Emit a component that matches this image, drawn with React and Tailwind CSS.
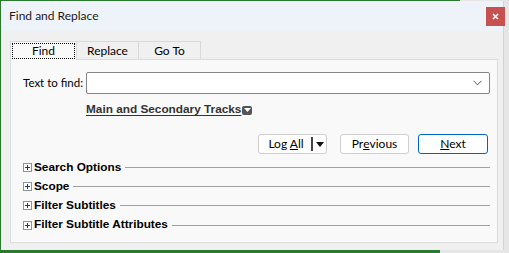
import React from "react";

const ui = { fontFamily: 'Lato, "Noto Sans", sans-serif' };
const bold = { fontFamily: '"Liberation Sans", Arial, sans-serif' };

function PlusBox() {
  return (
    <span className="w-[9px] h-[9px] border border-[#8a94a3] bg-white flex items-center justify-center shrink-0">
      <svg width="7" height="7" viewBox="0 0 7 7">
        <path d="M1 3.5h5M3.5 1v5" stroke="#1f3a68" strokeWidth="1" />
      </svg>
    </span>
  );
}

function Section({ label, tall }) {
  return (
    <div className={tall ? "flex items-center h-[20px]" : "flex items-center h-[19px]"}>
      <PlusBox />
      <span className="ml-[2px] text-[11.8px] font-bold text-black leading-none whitespace-nowrap" style={bold}>
        {label}
      </span>
      <div className="flex-1 h-px bg-[#a0a0a0] ml-[4px]" />
    </div>
  );
}

export default function App() {
  return (
    <div className="w-[509px] h-[253px] bg-[#e6e6e6] relative overflow-hidden" style={ui}>
      <div className="absolute top-0 left-0 w-[460px] h-px bg-[#2b7a30]" />
      <div className="absolute top-0 left-0 w-px h-[253px] bg-[#2b7a30]" />
      <div className="absolute bottom-0 left-0 w-[440px] h-[3px] bg-[#2b7a30]" />
      <div className="absolute left-[1px] top-[1px] w-[503px] h-[249px] bg-[#f0f0f0] border-r border-[#d4d4d4] flex flex-col">
        {/* title bar */}
        <div className="h-[30px] bg-[#eef3f9] flex items-center justify-between pl-[8px] shrink-0">
          <span className="text-[12px] text-[#1a1a1a]">Find and Replace</span>
          <div className="w-[19px] h-[19px] bg-[#c75050] flex items-center justify-center mr-[-2px]">
            <svg width="7" height="7" viewBox="0 0 7 7">
              <path d="M1 1l5 5M6 1l-5 5" stroke="white" strokeWidth="1.6" />
            </svg>
          </div>
        </div>

        {/* tabs */}
        <div className="pl-[9px] pt-[9px] flex items-end h-[28px] shrink-0">
          <div className="w-[67px] h-[19px] bg-[#f9f9f9] border border-b-0 border-[#d9d9d9] p-[1px] relative z-10 mb-[-1px]">
            <div className="w-full h-full border border-dotted border-black flex items-center justify-center text-[12px] text-black leading-none">
              Find
            </div>
          </div>
          <div className="w-[62px] h-[18px] bg-[#f0f0f0] border border-b-0 border-l-0 border-[#d9d9d9] flex items-center justify-center text-[12px] text-black leading-none">
            Replace
          </div>
          <div className="w-[62px] h-[18px] bg-[#f0f0f0] border border-b-0 border-l-0 border-[#d9d9d9] flex items-center justify-center text-[12px] text-black leading-none">
            Go To
          </div>
        </div>

        {/* panel */}
        <div className="ml-[9px] w-[488px] h-[184px] bg-[#f9f9f9] border border-[#dcdcdc] pl-[12px] pr-[7px] pt-[12px] flex flex-col">
          <div className="flex items-center">
            <span className="w-[63px] shrink-0 text-[11.5px] text-black leading-none whitespace-nowrap">Text to find:</span>
            <div className="flex-1 h-[22px] bg-white border border-[#858585] rounded-[2px] flex items-center justify-end pr-[7px]">
              <svg width="9" height="6" viewBox="0 0 9 6">
                <path d="M0.5 0.8L4.5 4.8L8.5 0.8" fill="none" stroke="#555" strokeWidth="1" />
              </svg>
            </div>
          </div>

          <div className="flex items-center ml-[63px] mt-[9px] h-[14px]">
            <span className="text-[11.8px] font-bold text-[#333] underline leading-none underline-offset-2" style={bold}>
              Main and Secondary Tracks
            </span>
            <span className="w-[10px] h-[9px] bg-[#555] rounded-[2px] flex items-center justify-center ml-px">
              <svg width="7" height="4" viewBox="0 0 7 4">
                <path d="M0 0h7L3.5 4z" fill="white" />
              </svg>
            </span>
          </div>

          <div className="flex justify-end mt-[17px]">
            <div className="w-[69px] h-[20px] bg-white border border-[#cfcfcf] rounded-[3px] flex items-center text-[12px] text-black leading-none">
              <span className="flex-1 text-center pl-[2px]">
                Log <span className="underline">A</span>ll
              </span>
              <span className="w-[2px] h-[14px] bg-[#444]" />
              <span className="w-[13px] flex items-center justify-center">
                <svg width="8" height="5" viewBox="0 0 8 5">
                  <path d="M0 0h8L4 5z" fill="#111" />
                </svg>
              </span>
            </div>
            <div className="w-[69px] h-[20px] ml-[13px] bg-white border border-[#cfcfcf] rounded-[3px] flex items-center justify-center text-[12px] text-black leading-none">
              Pr<span className="underline">e</span>vious
            </div>
            <div className="w-[70px] h-[20px] ml-[9px] bg-white border border-[#0067c0] rounded-[3px] flex items-center justify-center text-[12px] text-black leading-none mr-[2px]">
              <span className="underline">N</span>ext
            </div>
          </div>

          <div className="flex flex-col mt-[4px]">
            <Section label="Search Options" />
            <Section label="Scope" />
            <Section label="Filter Subtitles" />
            <Section label="Filter Subtitle Attributes" tall />
          </div>
        </div>
      </div>
    </div>
  );
}
